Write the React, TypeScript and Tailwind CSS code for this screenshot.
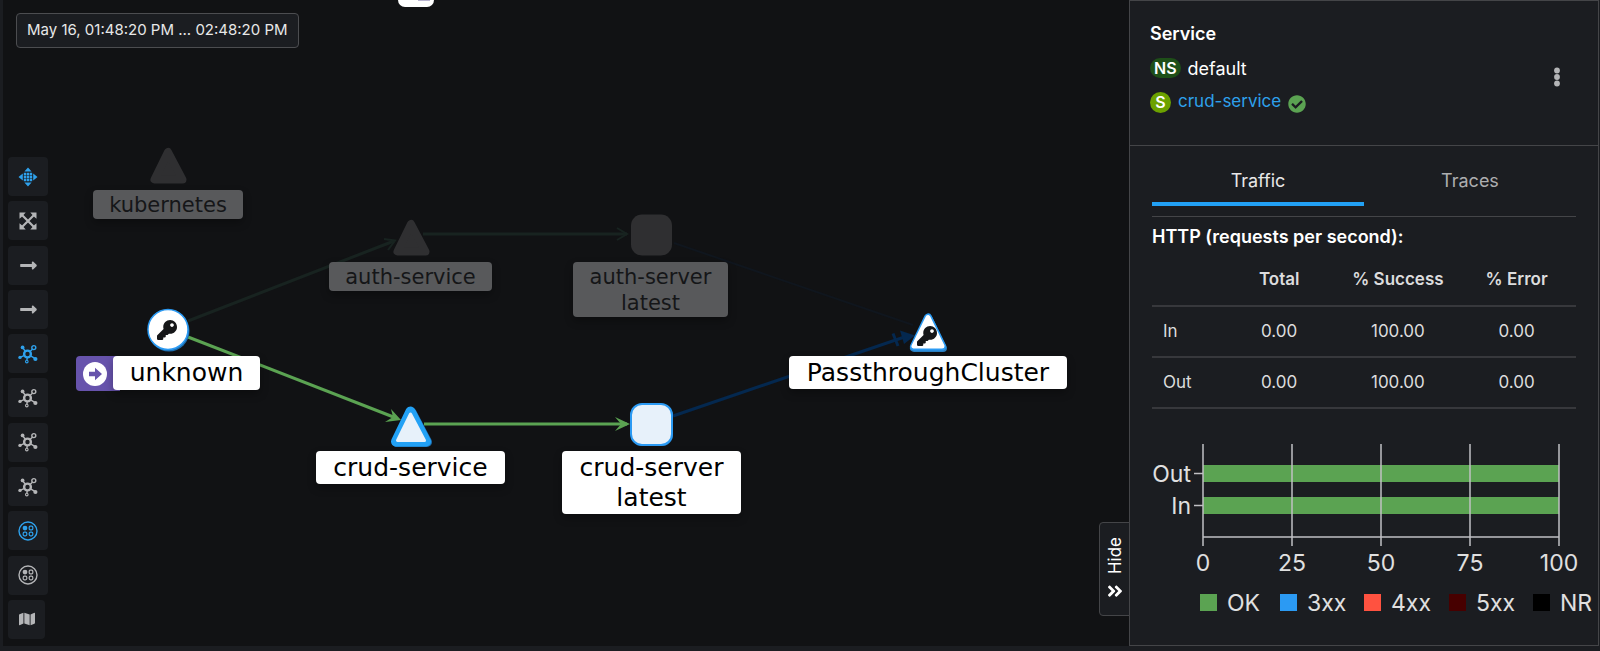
import type { ReactNode } from "react";
import { FaKey, FaMap, FaCheckCircle, FaAngleDoubleUp, FaLongArrowAltRight } from "react-icons/fa";

const DragIcon = () => (
  <svg viewBox="0 0 20 20" className="size-5" fill="currentColor" aria-hidden="true">
    <path d="M10 .5 13.6 4.6H6.4zM10 19.5l3.6-4.1H6.4zM.5 10l4.3-3.6v7.2zM19.500 10l-4.300-3.600v7.200z" />
    <path d="M5.800 5.800h2.400v2.400H5.800zM8.800 5.800h2.400v2.400H8.800zM11.800 5.800h2.400v2.400h-2.400zM5.800 8.800h2.400v2.400H5.800zM8.800 8.800h2.400v2.400H8.800zM11.800 8.800h2.400v2.400h-2.400zM5.800 11.800h2.400v2.400H5.800zM8.800 11.800h2.400v2.400H8.800zM11.800 11.800h2.400v2.400h-2.400z" />
  </svg>
);

const FitIcon = () => (
  <svg viewBox="0 0 18 18" className="size-[18px]" aria-hidden="true">
    <path d="M3 3 15 15M15 3 3 15" stroke="currentColor" strokeWidth="2.2" />
    <path
      fill="currentColor"
      d="M.5.5h6.2L4.9 2.6 2.6 4.9.5 6.7zM17.5.5h-6.2l1.8 2.1 2.3 2.3 2.1 1.8zM.5 17.5h6.2l-1.8-2.1-2.3-2.3-2.1-1.8zM17.5 17.5h-6.2l1.8-2.1 2.3-2.3 2.1-1.8z"
    />
  </svg>
);

const TopologyIcon = () => (
  <svg viewBox="0 0 20 20" className="size-5" fill="none" stroke="currentColor" aria-hidden="true">
    <circle cx="9.5" cy="10" r="3.4" strokeWidth="2.4" />
    <path d="M7.2 7 5 4.2M12 7.6l2.4-2.4M6 11.6l-3.4 1.6M12.6 11.8l4.2 2.6M9.2 13.8l-.3 2.4" strokeWidth="1.4" />
    <circle cx="15.8" cy="3.6" r="2" strokeWidth="1.4" />
    <circle cx="8.8" cy="17.6" r="1.3" strokeWidth="1.1" />
    <g fill="currentColor" stroke="none">
      <circle cx="4.6" cy="3.4" r="1.9" />
      <circle cx="2" cy="13.4" r="1.7" />
      <circle cx="17.4" cy="15" r="2.1" />
    </g>
  </svg>
);

const NamespaceIcon = () => (
  <svg viewBox="0 0 20 20" className="size-5" fill="none" stroke="currentColor" aria-hidden="true">
    <circle cx="10" cy="10" r="9" strokeWidth="1.4" />
    <circle cx="7" cy="7.1" r="2.4" fill="currentColor" stroke="none" />
    <rect x="11.2" y="5.2" width="3.6" height="3.6" rx="1" strokeWidth="1.2" />
    <rect x="5.2" y="11.2" width="3.6" height="3.6" rx="1.2" strokeWidth="1.2" />
    <rect x="11.2" y="11.2" width="3.6" height="3.6" rx="1.2" strokeWidth="1.2" />
  </svg>
);

type Tool = { label: string; icon: ReactNode; active?: boolean; narrow?: boolean };

const arrow = <FaLongArrowAltRight className="size-[19px]" />;

const tools: Tool[] = [
  { label: "Drag", icon: <DragIcon />, active: true },
  { label: "Zoom to fit", icon: <FitIcon /> },
  { label: "Hide healthy edges", icon: arrow },
  { label: "Hide mTLS edges", icon: arrow },
  { label: "Dagre layout", icon: <TopologyIcon />, active: true },
  { label: "Grid layout", icon: <TopologyIcon /> },
  { label: "Concentric layout", icon: <TopologyIcon /> },
  { label: "Breadth first layout", icon: <TopologyIcon /> },
  { label: "Namespace layout 1", icon: <NamespaceIcon />, active: true },
  { label: "Namespace layout 2", icon: <NamespaceIcon /> },
  { label: "Legend", icon: <FaMap className="size-4" />, narrow: true },
];

function Toolbar() {
  return (
    <div className="flex h-[482px] flex-col items-start justify-between">
      {tools.map((t) => (
        <button
          key={t.label}
          type="button"
          aria-label={t.label}
          className={`flex h-[39px] items-center justify-center rounded bg-[#1b1d21] ${t.narrow ? "w-[37px]" : "w-10"} ${
            t.active ? "text-[#2ea1ec]" : "text-[#b4b5b7]"
          }`}
        >
          {t.icon}
        </button>
      ))}
    </div>
  );
}

function NodeLabel({ lines, place, faded }: { lines: string[]; place: string; faded?: boolean }) {
  return (
    <div
      className={`absolute flex flex-col items-center justify-center rounded font-['DejaVu_Sans',sans-serif] whitespace-nowrap shadow-[0_4px_8px_rgba(0,0,0,0.3)] ${place} ${
        faded ? "bg-[#58595b] text-[21px] leading-[26px] text-[#151618]" : "bg-white text-[25px] leading-[30px] text-black"
      }`}
    >
      {lines.map((l) => (
        <span key={l}>{l}</span>
      ))}
    </div>
  );
}

function Graph() {
  return (
    <div className="absolute top-0 left-0 h-[640px] w-[1120px]">
      <svg width="1120" height="640" viewBox="3 0 1120 640" className="absolute inset-0" aria-hidden="true">
        <g fill="none" strokeWidth="3">
          <path d="M188 321 394 241M423 234H627" stroke="#182320" />
          <path d="M384 239 395 240.500 388 250M617 228 627 234 617 240" stroke="#182320" strokeWidth="2" />
          <path d="M674 243 913 325" stroke="#10161e" strokeWidth="2" />
          <path d="M188 337 396 418" stroke="#5ba352" />
          <path d="M424 424H627" stroke="#5ba352" />
          <path d="M673 416 903 337.500" stroke="#04284f" />
          <path d="M893 333.500 898 346" stroke="#04284f" />
        </g>
        <g fill="#5ba352">
          <path d="M391 409 401 420 385 422 393 417z" />
          <path d="M615 417 630 424 615 431 621 424z" />
        </g>
        <path d="M900 330.500 915 335.500 904 344z" fill="#04284f" />
        <g fill="#2f2f31" stroke="#2f2f31" strokeWidth="8" strokeLinejoin="round">
          <path d="M168 152 154.500 179.500H182.500z" />
          <path d="M411 224 397.500 251.500H425.500z" />
        </g>
        <rect x="631" y="214.500" width="41" height="41" rx="11" fill="#2f2f31" />
        <circle cx="169" cy="331" r="20.500" fill="#1d6fb0" />
        <circle cx="168" cy="329.500" r="20" fill="#fff" stroke="#2b9af3" strokeWidth="1.500" />
        <rect x="632" y="405" width="41" height="41" rx="11" fill="#1d6fb0" />
        <rect x="631" y="404" width="41" height="41" rx="11" fill="#e7f1fa" stroke="#2b9af3" strokeWidth="2" />
        <g strokeLinejoin="round">
          <path d="M411.500 412.500 397 442H427z" stroke="#1d6fb0" strokeWidth="10" />
          <path d="M410.500 411.500 396 441.500H426z" fill="#e7f1fa" stroke="#22a1f5" strokeWidth="10" />
          <path d="M410.500 414 397.500 440.500H424.500z" fill="#e7f1fa" stroke="#e7f1fa" strokeWidth="3" />
          <path d="M928.500 318.500 914 348H943z" stroke="#2b7fc0" strokeWidth="8" fill="#2b7fc0" />
          <path d="M928 317.500 914 346.500H942z" stroke="#2b9af3" strokeWidth="8" fill="#2b9af3" />
          <path d="M928 317.500 914 346H942z" stroke="#fff" strokeWidth="5" fill="#fff" />
        </g>
      </svg>
      <FaKey className="absolute top-[320px] left-[154px] size-5 text-[#151618]" />
      <FaKey className="absolute top-[326px] left-[914px] size-5 text-[#151618]" />

      <NodeLabel faded place="top-[190px] left-[90px] h-[29px] w-[150px]" lines={["kubernetes"]} />
      <NodeLabel faded place="top-[262px] left-[326px] h-[29px] w-[163px]" lines={["auth-service"]} />
      <NodeLabel faded place="top-[262px] left-[570px] h-[55px] w-[155px]" lines={["auth-server", "latest"]} />
      <div className="absolute top-[356px] left-[73px] flex h-[35px] w-11 items-center rounded-l bg-[#6753ac] pl-[7px]">
        <svg viewBox="0 0 24 24" className="size-6" aria-hidden="true">
          <circle cx="12" cy="12" r="12" fill="#fff" />
          <path d="M6 9.800h6V5.800L19 12l-7 6.200v-4H6z" fill="#6753ac" />
        </svg>
      </div>
      <NodeLabel place="top-[356px] left-[110px] h-[34px] w-[147px]" lines={["unknown"]} />
      <NodeLabel place="top-[451px] left-[313px] h-[33px] w-[189px]" lines={["crud-service"]} />
      <NodeLabel place="top-[451px] left-[559px] h-[63px] w-[179px]" lines={["crud-server", "latest"]} />
      <NodeLabel place="top-[356px] left-[786px] h-[33px] w-[278px]" lines={["PassthroughCluster"]} />
    </div>
  );
}

const rows = [
  { name: "In", total: "0.00", success: "100.00", error: "0.00" },
  { name: "Out", total: "0.00", success: "100.00", error: "0.00" },
];

const ticks = [
  { v: "0", x: 51 },
  { v: "25", x: 140 },
  { v: "50", x: 229 },
  { v: "75", x: 318 },
  { v: "100", x: 407 },
];

const legend = [
  { name: "OK", x: 48, color: "#5ba352" },
  { name: "3xx", x: 128, color: "#2b9af3" },
  { name: "4xx", x: 212, color: "#ff5240" },
  { name: "5xx", x: 297, color: "#470000" },
  { name: "NR", x: 381, color: "#000000" },
];

function TrafficChart() {
  return (
    <svg
      width="444"
      height="180"
      viewBox="0 0 444 180"
      className="mt-[31px] block max-w-none text-[23px]"
      fill="#e0e0e0"
      role="img"
      aria-label="Traffic by status"
    >
      <rect x="51" y="25" width="356" height="17" fill="#5ba352" />
      <rect x="51" y="57" width="356" height="17" fill="#5ba352" />
      <g stroke="#c0c0c4" strokeWidth="1.500">
        {ticks.map((t) => (
          <path key={t.v} d={`M${t.x} 4V106`} />
        ))}
        <path d="M51 97H407M42 33.500H51M42 65.500H51" />
      </g>
      <text x="39" y="42" textAnchor="end">Out</text>
      <text x="39" y="74" textAnchor="end">In</text>
      {ticks.map((t) => (
        <text key={t.v} x={t.x} y="131" textAnchor="middle">{t.v}</text>
      ))}
      {legend.map((l) => (
        <g key={l.name}>
          <rect x={l.x} y="154" width="17" height="17" fill={l.color} />
          <text x={l.x + 27} y="171">{l.name}</text>
        </g>
      ))}
    </svg>
  );
}

function SidePanel() {
  return (
    <aside className="relative mr-px w-[470px] shrink-0 border border-[#444548] bg-[#1b1d21]">
      <button
        type="button"
        className="absolute top-[521px] -left-[31px] flex h-[94px] w-[31px] items-center justify-center rounded-l border border-[#444548] bg-[#1b1d21] text-white"
      >
        <span className="flex rotate-180 items-center gap-2 text-[17px] leading-5 [writing-mode:vertical-rl]">
          <FaAngleDoubleUp className="size-[18px] -rotate-90" />
          Hide
        </span>
      </button>
      <header className="flex h-[145px] items-center justify-between border-b border-[#444548] pr-[35px] pl-5">
        <div className="flex flex-col pb-[10px]">
          <h2 className="h-[34px] text-[18px] leading-[34px] font-semibold text-white">Service</h2>
          <div className="flex h-[34px] items-center gap-[7px] text-[18px] text-white">
            <span className="flex h-5 items-center rounded-full bg-[#1e4f18] px-1 text-[16px] font-semibold">NS</span>
            <span>default</span>
          </div>
          <div className="flex h-[34px] items-center gap-[7px] text-[17px]">
            <span className="flex size-[21px] items-center justify-center rounded-full bg-[#6ca100] text-[16px] font-semibold text-white">S</span>
            <a href="#crud-service" className="text-[#2ea1ec]">crud-service</a>
            <FaCheckCircle className="mt-1 size-[18px] text-[#5ba352]" />
          </div>
        </div>
        <button type="button" aria-label="Actions" className="flex w-3 justify-center pt-2 text-[#b4b5b7]">
          <svg viewBox="0 0 6 20" className="h-5 w-[6px]" fill="currentColor" aria-hidden="true">
            <circle cx="3" cy="3.500" r="2.900" />
            <circle cx="3" cy="10" r="2.900" />
            <circle cx="3" cy="16.500" r="2.900" />
          </svg>
        </button>
      </header>
      <div className="pt-3 pr-[22px] pl-[22px]">
        <div role="tablist" className="flex">
          <button type="button" role="tab" aria-selected="true" className="h-12 flex-1 border-b-4 border-[#22a1f5] text-[18px] text-[#e8e8e8]">
            Traffic
          </button>
          <button type="button" role="tab" aria-selected="false" className="h-12 flex-1 border-b-4 border-transparent text-[18px] text-[#adaeb0]">
            Traces
          </button>
        </div>
        <div className="mt-[10px] border-t border-[#444548] pt-2">
          <h3 className="text-[18px] leading-6 font-semibold text-white">HTTP (requests per second):</h3>
        </div>
        <table className="mt-[6px] w-full table-fixed border-collapse text-center text-[17px] text-[#dcdcdd]">
          <colgroup>
            <col className="w-[16%]" />
            <col className="w-[28%]" />
            <col className="w-[28%]" />
            <col className="w-[28%]" />
          </colgroup>
          <thead>
            <tr className="h-[51px] border-b-2 border-[#37383c]">
              <th aria-label="Direction" />
              <th className="font-semibold">Total</th>
              <th className="font-semibold">% Success</th>
              <th className="font-semibold">% Error</th>
            </tr>
          </thead>
          <tbody>
            {rows.map((r) => (
              <tr key={r.name} className="h-[51px] border-b-2 border-[#37383c]">
                <td className="pl-[11px] text-left">{r.name}</td>
                <td>{r.total}</td>
                <td>{r.success}</td>
                <td>{r.error}</td>
              </tr>
            ))}
          </tbody>
        </table>
        <TrafficChart />
      </div>
    </aside>
  );
}

export default function App() {
  return (
    <div className="flex min-h-screen bg-[#1b1d21] pb-[5px] pl-[3px] font-[Inter,'Liberation_Sans',sans-serif]">
      <main className="relative flex min-w-0 flex-1 flex-col justify-between overflow-hidden bg-[#111214]">
        <Graph />
        <div className="absolute top-0 left-[395px] h-[7px] w-9 rounded-b-lg bg-white">
          <div className="ml-5 h-px w-3 bg-[#b9b4d0]" />
        </div>
        <div className="relative px-[13px] pt-[13px]">
          <time className="inline-flex h-[35px] items-center rounded border border-[#4c4d50] bg-[#1b1d21] px-[10px] text-[15px] text-[#e8e8e8]">
            May 16, 01:48:20 PM ... 02:48:20 PM
          </time>
        </div>
        <div className="relative ml-[5px] w-10 pb-[7px]">
          <Toolbar />
        </div>
      </main>
      <SidePanel />
    </div>
  );
}
